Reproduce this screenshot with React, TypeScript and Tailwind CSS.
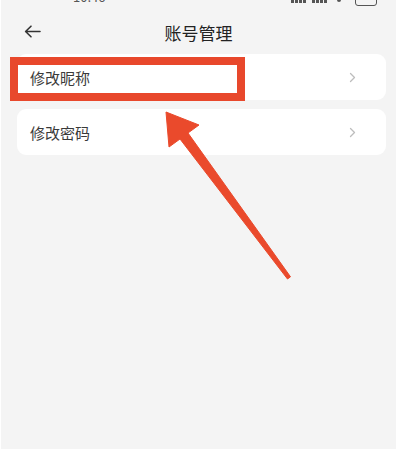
import React from "react";

const font = { fontFamily: '"Noto Sans CJK SC", "Noto Sans", sans-serif' };

function Chevron() {
  return (
    <svg width="7" height="11" viewBox="0 0 7 11" className="shrink-0">
      <polyline points="1.5,1.5 5.5,5.5 1.5,9.5" fill="none" stroke="#bdbdbd" strokeWidth="1.3" strokeLinecap="round" strokeLinejoin="round" />
    </svg>
  );
}

function Row({ label }: { label: string }) {
  return (
    <div className="flex h-[46px] items-center justify-between rounded-[9px] bg-white pl-[13px] pr-[30px]">
      <span className="text-[15px] leading-none text-[#3a3a3a]">{label}</span>
      <Chevron />
    </div>
  );
}

export default function App() {
  return (
    <div className="relative h-[449px] w-[396px] overflow-hidden border-l border-white bg-[#f4f4f4]" style={font}>
      {/* status bar (cut off at the top edge, as in the screenshot) */}
      <div className="h-[10px] overflow-hidden">
        <div className="-mt-[11px] flex h-[14px] items-end justify-between pl-[72px] pr-[19px]">
          <span className="text-[13px] leading-[13px] text-[#555]">10:46</span>
          <div className="flex items-end gap-[6px]">
            <div className="flex items-end gap-[1px]">
              {[4, 6, 8, 10].map((h, i) => (
                <div key={i} className="w-[3px] bg-[#555]" style={{ height: h }} />
              ))}
            </div>
            <div className="mr-[4px] flex items-end gap-[1px]">
              {[4, 6, 8, 10].map((h, i) => (
                <div key={i} className="w-[3px] bg-[#555]" style={{ height: h }} />
              ))}
            </div>
            <div className="mb-[1px] h-[4px] w-[4px] rounded-full bg-[#555]" />
            <div className="-mb-[3px] ml-[8px] h-[9px] w-[22px] rounded-[3px] border border-[#555]" />
          </div>
        </div>
      </div>

      {/* header */}
      <div className="relative flex h-[44px] items-center justify-center">
        <svg className="absolute left-[23px] top-[15px]" width="17" height="13" viewBox="0 0 17 13">
          <path d="M16 6.5H1.8M7 1.2L1.6 6.5L7 11.8" fill="none" stroke="#333" strokeWidth="1.6" strokeLinecap="round" strokeLinejoin="round" />
        </svg>
        <span className="text-[17px] leading-none text-[#222]">账号管理</span>
      </div>

      {/* list */}
      <div className="flex flex-col gap-[9px] pl-[16px] pr-[10px]">
        <Row label="修改昵称" />
        <Row label="修改密码" />
      </div>

      {/* annotation: red box */}
      <div className="absolute left-[9px] top-[57px] h-[44px] w-[235px] border-[8px] border-[#e8482c]" />

      {/* annotation: arrow */}
      <svg className="absolute left-0 top-0" width="396" height="449" viewBox="0 0 396 449">
        <polygon
          points="165,112 198,125 187,133 289.5,276.8 286.5,279 179,139 168,147"
          fill="#ea4a2c"
          stroke="#ea4a2c"
          strokeWidth="1"
          strokeLinejoin="round"
        />
      </svg>
    </div>
  );
}
